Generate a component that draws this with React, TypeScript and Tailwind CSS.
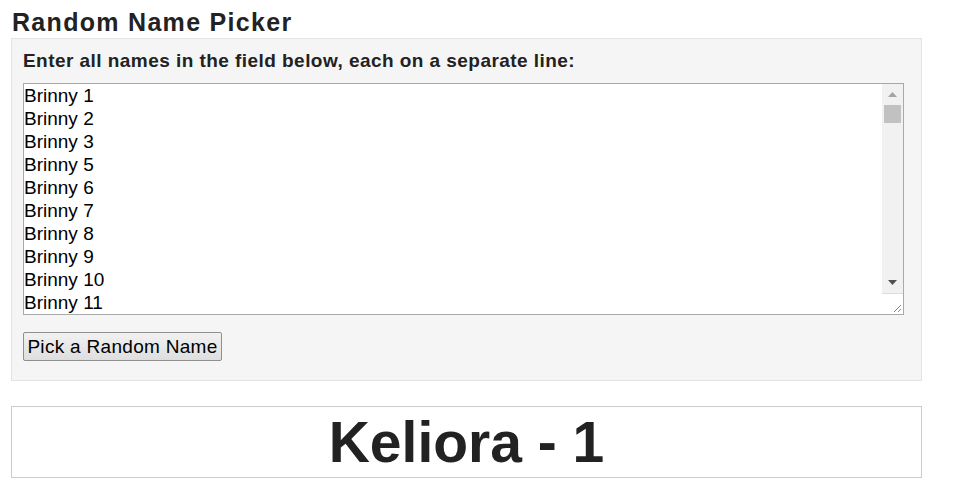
import { useState } from "react";

const NAMES = [
  "Brinny 1", "Brinny 2", "Brinny 3", "Brinny 5", "Brinny 6", "Brinny 7", "Brinny 8", "Brinny 9",
  "Brinny 10", "Brinny 11", "Brinny 12", "Brinny 13", "Brinny 14", "Brinny 15", "Brinny 16",
  "Brinny 17", "Brinny 18", "Brinny 19", "Brinny 20", "Brinny 21", "Brinny 22", "Brinny 23",
  "Brinny 24", "Brinny 25", "Brinny 26", "Brinny 27", "Brinny 28", "Brinny 29", "Brinny 30",
  "Brinny 31", "Brinny 32", "Brinny 33", "Brinny 34", "Brinny 35", "Brinny 36", "Brinny 37",
  "Brinny 38", "Brinny 39", "Brinny 40",
];

function FakeScrollbar() {
  return (
    <div className="w-[21px] shrink-0 flex flex-col bg-[#f1f1f1]">
      <div className="h-[21px] flex items-center justify-center">
        <svg width="9" height="5" viewBox="0 0 9 5">
          <path d="M4.5 0L9 5H0z" fill="#a3a3a3" />
        </svg>
      </div>
      <div className="h-[18px] mx-[2px] bg-[#c1c1c1]" />
      <div className="flex-1" />
      <div className="h-[21px] flex items-center justify-center">
        <svg width="9" height="5" viewBox="0 0 9 5">
          <path d="M0 0H9L4.5 5z" fill="#505050" />
        </svg>
      </div>
      <div className="h-[21px] bg-white border-t border-[#dcdcdc] flex items-end justify-end p-[2px]">
        <svg width="8" height="8" viewBox="0 0 8 8">
          <path d="M8 1L1 8M8 5L5 8" stroke="#8a8a8a" strokeWidth="1" />
        </svg>
      </div>
    </div>
  );
}

export default function App() {
  const [text, setText] = useState(NAMES.join("\n"));
  const [picked, setPicked] = useState("Keliora - 1");

  const pick = () => {
    const list = text.split("\n").map((s) => s.trim()).filter(Boolean);
    if (list.length) setPicked(list[Math.floor(Math.random() * list.length)]);
  };

  return (
    <div className="bg-white min-h-[491px] px-[11px] pt-[8px] text-[#222] font-['Liberation_Sans',Arial,sans-serif]">
      <h1 className="text-[25px] font-bold leading-[28px] pl-[1px] mb-[2px] tracking-[1.3px]">Random Name Picker</h1>

      {/* Input panel */}
      <div className="w-[911px] bg-[#f5f5f5] border border-[#e3e3e3] px-[11px] pt-[11px] pb-[19px]">
        <label className="block text-[19px] font-bold leading-[22px] mb-[11px] tracking-[0.45px]">
          Enter all names in the field below, each on a separate line:
        </label>
        <div className="w-[881px] h-[232px] flex border border-[#a9a9a9] bg-white">
          <textarea
            value={text}
            onChange={(e) => setText(e.target.value)}
            className="flex-1 h-full resize-none overflow-hidden bg-white p-0 text-[19px] leading-[23px] text-black font-['Liberation_Sans',Arial,sans-serif] outline-none"
          />
          <FakeScrollbar />
        </div>
        <button
          onClick={pick}
          className="mt-[17px] h-[29px] w-[199px] text-[19px] leading-[20px] tracking-[0.3px] text-black border border-[#8f8f8f] rounded-[2px] bg-gradient-to-b from-[#f2f2f2] to-[#dedede] font-['Liberation_Sans',Arial,sans-serif]"
        >
          Pick a Random Name
        </button>
      </div>

      {/* Result */}
      <div className="w-[911px] mt-[25px] h-[72px] border border-[#cccccc] bg-white flex items-center justify-center">
        <span className="text-[57px] font-bold leading-none text-[#222]">{picked}</span>
      </div>
    </div>
  );
}
